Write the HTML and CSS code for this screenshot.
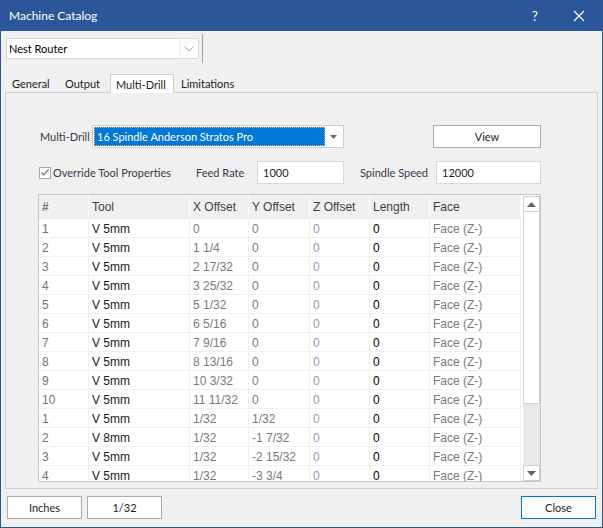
FILE: index.html
```html
<!DOCTYPE html>
<html>
<head>
<meta charset="utf-8">
<link rel="stylesheet" href="styles.css">
</head>
<body>
<div class="window">
  <div class="titlebar">
    <span class="title">Machine Catalog</span>
    <span class="help">?</span>
    <span class="close-x"><svg width="12" height="12" viewBox="0 0 12 12"><path d="M1 1L11 11M11 1L1 11" stroke="#fff" stroke-width="1.2" fill="none"/></svg></span>
  </div>
  <div class="top-row">
    <div class="combo machine">
      <span class="combo-text">Nest Router</span>
      <span class="combo-btn"><svg width="10" height="6" viewBox="0 0 10 6"><path d="M0.5 0.5L5 5L9.5 0.5" stroke="#a8a8a8" stroke-width="1" fill="none"/></svg></span>
    </div>
    <div class="sep"></div>
  </div>
  <div class="tabs">
    <div class="tab t-general">General</div>
    <div class="tab t-output">Output</div>
    <div class="tab active">Multi-Drill</div>
    <div class="tab t-limits">Limitations</div>
  </div>
  <div class="panel">
    <div class="row1">
      <span class="lbl md-lbl">Multi-Drill</span>
      <div class="combo md-combo">
        <span class="md-sel">16 Spindle Anderson Stratos Pro</span>
        <span class="md-btn"><svg width="7" height="4" viewBox="0 0 7 4"><path d="M0 0H7L3.5 4Z" fill="#6a6a6a"/></svg></span>
      </div>
      <div class="btn view-btn">View</div>
    </div>
    <div class="row2">
      <div class="chk-group">
        <span class="chk"><svg width="11" height="11" viewBox="0 0 11 11"><path d="M1.5 5.5L4.2 8.2L9.5 2" stroke="#707070" stroke-width="1.3" fill="none"/></svg></span>
        <span class="lbl">Override Tool Properties</span>
      </div>
      <span class="lbl feed-lbl">Feed Rate</span>
      <div class="input feed-in">1000</div>
      <span class="lbl spin-lbl">Spindle Speed</span>
      <div class="input spin-in">12000</div>
    </div>
    <div class="grid">
      <div class="grid-body">
        <div class="grow head">
          <span class="c c1">#</span><span class="c c2">Tool</span><span class="c c3">X Offset</span><span class="c c4">Y Offset</span><span class="c c5">Z Offset</span><span class="c c6">Length</span><span class="c c7">Face</span>
        </div>
        <div class="grow"><span class="c c1">1</span><span class="c c2">V 5mm</span><span class="c c3">0</span><span class="c c4">0</span><span class="c c5">0</span><span class="c c6">0</span><span class="c c7">Face (Z-)</span></div>
        <div class="grow"><span class="c c1">2</span><span class="c c2">V 5mm</span><span class="c c3">1 1/4</span><span class="c c4">0</span><span class="c c5">0</span><span class="c c6">0</span><span class="c c7">Face (Z-)</span></div>
        <div class="grow"><span class="c c1">3</span><span class="c c2">V 5mm</span><span class="c c3">2 17/32</span><span class="c c4">0</span><span class="c c5">0</span><span class="c c6">0</span><span class="c c7">Face (Z-)</span></div>
        <div class="grow"><span class="c c1">4</span><span class="c c2">V 5mm</span><span class="c c3">3 25/32</span><span class="c c4">0</span><span class="c c5">0</span><span class="c c6">0</span><span class="c c7">Face (Z-)</span></div>
        <div class="grow"><span class="c c1">5</span><span class="c c2">V 5mm</span><span class="c c3">5 1/32</span><span class="c c4">0</span><span class="c c5">0</span><span class="c c6">0</span><span class="c c7">Face (Z-)</span></div>
        <div class="grow"><span class="c c1">6</span><span class="c c2">V 5mm</span><span class="c c3">6 5/16</span><span class="c c4">0</span><span class="c c5">0</span><span class="c c6">0</span><span class="c c7">Face (Z-)</span></div>
        <div class="grow"><span class="c c1">7</span><span class="c c2">V 5mm</span><span class="c c3">7 9/16</span><span class="c c4">0</span><span class="c c5">0</span><span class="c c6">0</span><span class="c c7">Face (Z-)</span></div>
        <div class="grow"><span class="c c1">8</span><span class="c c2">V 5mm</span><span class="c c3">8 13/16</span><span class="c c4">0</span><span class="c c5">0</span><span class="c c6">0</span><span class="c c7">Face (Z-)</span></div>
        <div class="grow"><span class="c c1">9</span><span class="c c2">V 5mm</span><span class="c c3">10 3/32</span><span class="c c4">0</span><span class="c c5">0</span><span class="c c6">0</span><span class="c c7">Face (Z-)</span></div>
        <div class="grow"><span class="c c1">10</span><span class="c c2">V 5mm</span><span class="c c3">11 11/32</span><span class="c c4">0</span><span class="c c5">0</span><span class="c c6">0</span><span class="c c7">Face (Z-)</span></div>
        <div class="grow"><span class="c c1">1</span><span class="c c2">V 5mm</span><span class="c c3">1/32</span><span class="c c4">1/32</span><span class="c c5">0</span><span class="c c6">0</span><span class="c c7">Face (Z-)</span></div>
        <div class="grow"><span class="c c1">2</span><span class="c c2">V 8mm</span><span class="c c3">1/32</span><span class="c c4">-1 7/32</span><span class="c c5">0</span><span class="c c6">0</span><span class="c c7">Face (Z-)</span></div>
        <div class="grow"><span class="c c1">3</span><span class="c c2">V 5mm</span><span class="c c3">1/32</span><span class="c c4">-2 15/32</span><span class="c c5">0</span><span class="c c6">0</span><span class="c c7">Face (Z-)</span></div>
        <div class="grow"><span class="c c1">4</span><span class="c c2">V 5mm</span><span class="c c3">1/32</span><span class="c c4">-3 3/4</span><span class="c c5">0</span><span class="c c6">0</span><span class="c c7">Face (Z-)</span></div>
      </div>
      <div class="vscroll">
        <div class="sb-arrow"><svg width="9" height="5" viewBox="0 0 9 5"><path d="M0 5H9L4.5 0Z" fill="#606060"/></svg></div>
        <div class="sb-thumb"></div>
        <div class="sb-track"></div>
        <div class="sb-arrow"><svg width="9" height="5" viewBox="0 0 9 5"><path d="M0 0H9L4.5 5Z" fill="#606060"/></svg></div>
      </div>
    </div>
  </div>
  <div class="footer">
    <div class="btn foot-btn">Inches</div>
    <div class="btn foot-btn">1/32</div>
    <div class="btn foot-btn close-btn">Close</div>
  </div>
</div>
</body>
</html>
```

FILE: styles.css
```css
* { box-sizing: border-box; }
html, body { margin: 0; padding: 0; }
body {
  width: 603px;
  height: 528px;
  background: #f0f0f0;
  font-family: "Lato", "Open Sans", sans-serif;
  font-size: 11px;
  color: #1e1e1e;
  overflow: hidden;
}
.window {
  width: 603px;
  height: 528px;
  border: 1px solid #2b579a;
  border-top: none;
  background: #f0f0f0;
  display: flex;
  flex-direction: column;
}
.titlebar {
  height: 31px;
  margin: 0 -1px;
  background: #2b579a;
  color: #fff;
  display: flex;
  align-items: center;
  padding-left: 9px;
  font-size: 12px;
}
.title { flex: 1; }
.help { width: 14px; text-align: center; margin-right: 31px; font-size: 13px; }
.close-x { width: 12px; height: 12px; margin-right: 18px; display: flex; }

.top-row {
  display: flex;
  align-items: flex-start;
  padding-top: 3px;
  padding-left: 5px;
  height: 32px;
}
.combo {
  background: #fff;
  border: 1px solid #d9d9d9;
  display: flex;
  align-items: center;
}
.machine {
  width: 193px;
  height: 21px;
  margin-top: 4px;
  padding-left: 2px;
  color: #000;
}
.combo-text { flex: 1; }
.combo-btn {
  width: 19px;
  height: 19px;
  background: #fcfcfc;
  border-left: 1px solid #f0f0f0;
  display: flex;
  align-items: center;
  justify-content: center;
}
.sep {
  width: 1px;
  height: 29px;
  background: #a0a0a0;
  margin-left: 3px;
}

.tabs {
  display: flex;
  margin-top: 11px;
  padding-left: 5px;
  height: 18px;
  position: relative;
  z-index: 1;
}
.tab {
  height: 18px;
  padding: 0 0 0 6px;
  display: flex;
  align-items: center;
  color: #1e1e1e;
  white-space: nowrap;
}
.t-general { width: 52px; }
.t-output { width: 52px; padding-left: 7px; }
.tab.active {
  width: 64px;
  height: 19px;
  background: #fff;
  border: 1px solid #d0d0d0;
  border-bottom: none;
  padding-left: 5px;
}
.t-limits { padding-left: 7px; }

.panel {
  margin-left: 4px;
  width: 593px;
  height: 397px;
  border: 1px solid #d0d0d0;
  padding: 32px 0 6px 32px;
}
.lbl { color: #3a3a4a; white-space: nowrap; }
.row1 {
  display: flex;
  align-items: center;
  width: 503px;
  height: 23px;
}
.md-lbl { width: 54px; padding-left: 2px; }
.md-combo {
  width: 252px;
  height: 23px;
  padding: 1px;
  border-color: #cfcfcf;
}
.md-sel {
  flex: 1;
  height: 19px;
  background: #0078d7;
  color: #fff;
  outline: 1px dotted #e8b26a;
  outline-offset: -1px;
  display: flex;
  align-items: center;
  padding-left: 3px;
}
.md-btn {
  width: 17px;
  display: flex;
  justify-content: center;
  align-items: center;
}
.btn {
  background: #fdfdfd;
  border: 1px solid #adadad;
  display: flex;
  align-items: center;
  justify-content: center;
  color: #1e1e1e;
}
.view-btn { margin-left: auto; width: 108px; height: 23px; }

.row2 {
  display: flex;
  align-items: center;
  width: 503px;
  height: 23px;
  margin-top: 13px;
}
.chk-group { width: 158px; display: flex; align-items: center; padding-left: 1px; }
.chk {
  width: 12px;
  height: 12px;
  border: 1px solid #a8a8a8;
  background: #fff;
  margin-right: 2px;
  display: flex;
  align-items: center;
  justify-content: center;
}
.feed-lbl { width: 61px; }
.input {
  height: 23px;
  background: #fff;
  border: 1px solid #d9d9d9;
  display: flex;
  align-items: center;
  padding-left: 5px;
  color: #1e1e1e;
}
.feed-in { width: 87px; }
.spin-lbl { width: 76px; margin-left: 16px; }
.spin-in { width: 105px; }

.grid {
  margin-top: 10px;
  width: 503px;
  height: 288px;
  border: 1px solid #c6c6c6;
  background: #fff;
  display: flex;
  font-family: "Liberation Sans", Arial, sans-serif;
  font-size: 12px;
}
.grid-body { width: 482px; height: 286px; overflow: hidden; }
.grow { display: flex; height: 19px; border-bottom: 1px solid #f0f0f0; }
.grow.head { height: 24px; background: #f0f0f0; border-bottom: 1px solid #e6e6e6; }
.c {
  display: flex;
  align-items: center;
  padding-left: 3px;
  padding-top: 1px;
  border-right: 1px solid #f0f0f0;
  white-space: nowrap;
  overflow: hidden;
}
.head .c { border-right: 1px solid #fafafa; color: #404040; padding-top: 0; }
.c1 { width: 50px; color: #737373; }
.c2 { width: 101px; color: #1a1a1a; }
.c3 { width: 59px; color: #7a7a7a; }
.c4 { width: 61px; color: #7a7a7a; }
.c5 { width: 60px; color: #8d9db2; }
.c6 { width: 60px; color: #000; }
.c7 { width: 91px; color: #7a7a7a; }

.vscroll {
  width: 17px;
  margin: 1px 0 0 2px;
  display: flex;
  flex-direction: column;
  height: 285px;
}
.sb-arrow {
  height: 16px;
  background: #fff;
  border: 1px solid #d0d0d0;
  display: flex;
  align-items: center;
  justify-content: center;
}
.sb-thumb { height: 192px; background: #fff; border: 1px solid #d0d0d0; border-top: none; }
.sb-track { flex: 1; background: #e8e8e8; }

.footer {
  display: flex;
  margin-top: 7px;
  padding: 0 6px;
  gap: 5px;
}
.foot-btn { width: 75px; height: 23px; }
.close-btn { margin-left: auto; border-color: #0078d7; }
```
